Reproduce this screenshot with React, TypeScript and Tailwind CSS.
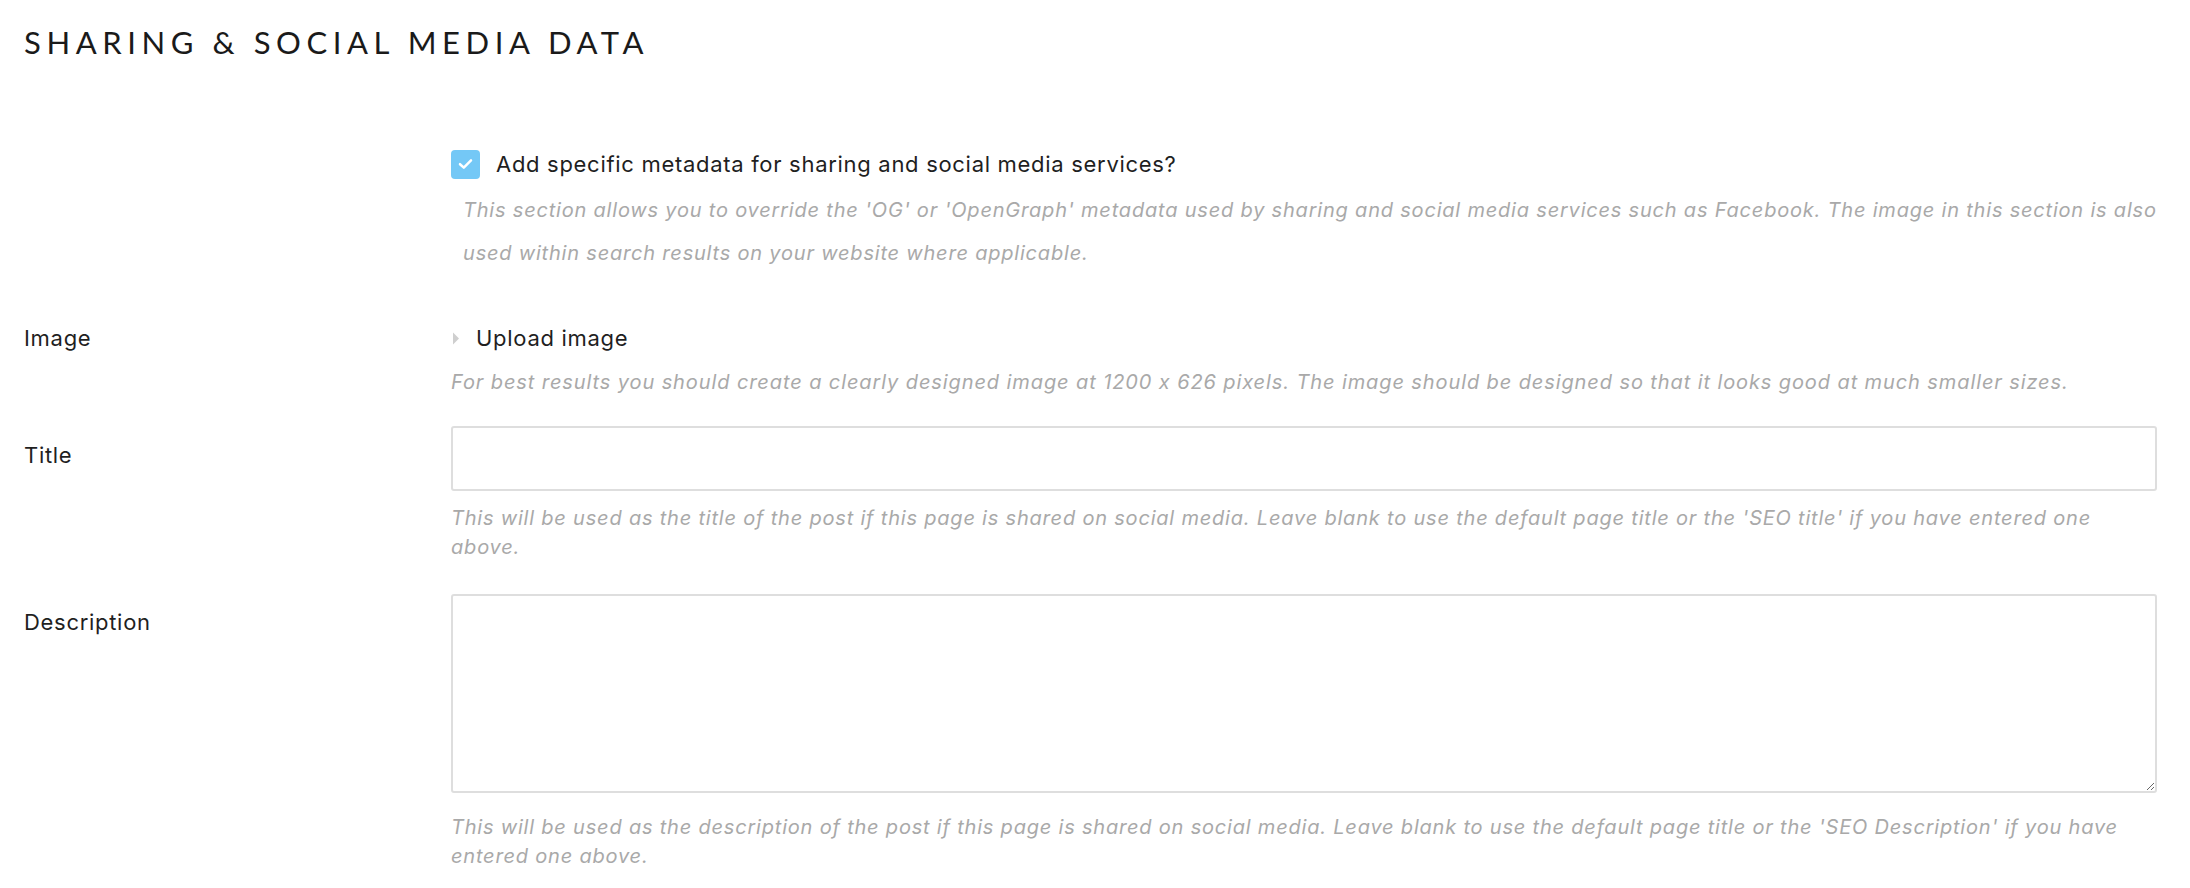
import React from "react";

function Check() {
  return (
    <div className="w-[29px] h-[29px] rounded-[4px] bg-[#74c8f6] flex items-center justify-center shrink-0">
      <svg width="15" height="12" viewBox="0 0 15 12" fill="none">
        <path d="M2 6.2 L5.8 9.6 L13 2.4" stroke="#fff" strokeWidth="2.5" strokeLinecap="round" strokeLinejoin="round" />
      </svg>
    </div>
  );
}

export default function App() {
  return (
    <div className="min-h-screen bg-white pl-[24px] pr-[33px] pt-[24px] pb-[40px] text-[#1f1f1f] font-[Inter,sans-serif] [font-feature-settings:'calt'_0]">
      <h2 className="font-[Lato,sans-serif] text-[31px] leading-[36px] tracking-[0.18em] font-normal text-[#1a1a1a]">
        SHARING &amp; SOCIAL MEDIA DATA
      </h2>

      <div className="flex mt-[89px]">
        <div className="w-[427px] shrink-0" />
        <div className="flex-1 min-w-0">
          <div className="flex items-center h-[30px]">
            <Check />
            <span className="ml-[16px] text-[22px] leading-[30px] tracking-[0.7px]">
              Add specific metadata for sharing and social media services?
            </span>
          </div>
          <p className="mt-[10px] pl-[12px] text-[20px] leading-[43px] italic tracking-[0.8px] text-[#a9a9a9] whitespace-nowrap">
            This section allows you to override the 'OG' or 'OpenGraph' metadata used by sharing and social media services such as Facebook. The image in this section is also
            <br />
            used within search results on your website where applicable.
          </p>
        </div>
      </div>

      <div className="flex mt-[48px]">
        <div className="w-[427px] shrink-0 text-[22px] leading-[30px] tracking-[0.7px]">Image</div>
        <div className="flex-1 min-w-0">
          <div className="flex items-center h-[30px]">
            <svg width="8" height="13" viewBox="0 0 8 13" className="ml-[1px] shrink-0">
              <path d="M1 0.5 L7 6.5 L1 12.5 Z" fill="#cfcfcf" />
            </svg>
            <span className="ml-[16px] text-[22px] leading-[30px] tracking-[0.7px]">Upload image</span>
          </div>
          <p className="mt-[15px] text-[20px] leading-[28px] italic tracking-[0.9px] text-[#a9a9a9] whitespace-nowrap">
            For best results you should create a clearly designed image at 1200 x 626 pixels. The image should be designed so that it looks good at much smaller sizes.
          </p>
        </div>
      </div>

      <div className="flex mt-[30px]">
        <div className="w-[427px] shrink-0 pt-[14px] text-[22px] leading-[30px] tracking-[0.7px]">Title</div>
        <div className="flex-1 min-w-0">
          <input
            type="text"
            className="block w-full h-[65px] border-2 border-[#dedede] rounded-[3px] bg-white px-3 text-[22px] outline-none"
          />
          <p className="mt-[13px] text-[20px] leading-[29px] italic tracking-[0.8px] text-[#a9a9a9] whitespace-nowrap">
            This will be used as the title of the post if this page is shared on social media. Leave blank to use the default page title or the 'SEO title' if you have entered one
            <br />
            above.
          </p>
        </div>
      </div>

      <div className="flex mt-[32px]">
        <div className="w-[427px] shrink-0 pt-[13px] text-[22px] leading-[30px] tracking-[0.7px]">Description</div>
        <div className="flex-1 min-w-0">
          <textarea className="block w-full h-[199px] border-2 border-[#dedede] rounded-[3px] bg-white px-3 py-2 text-[22px] outline-none" />
          <p className="mt-[20px] text-[20px] leading-[29px] italic tracking-[0.8px] text-[#a9a9a9] whitespace-nowrap">
            This will be used as the description of the post if this page is shared on social media. Leave blank to use the default page title or the 'SEO Description' if you have
            <br />
            entered one above.
          </p>
        </div>
      </div>
    </div>
  );
}
